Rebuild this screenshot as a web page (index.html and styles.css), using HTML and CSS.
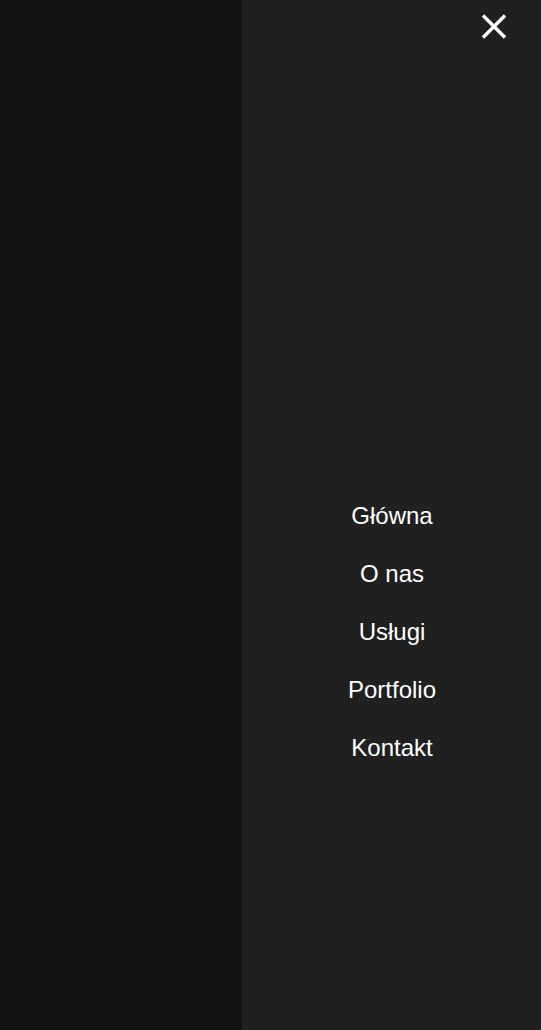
FILE: index.html
```html
<!DOCTYPE html>
<html lang="pl">
<head>
<meta charset="utf-8">
<title>Menu</title>
<link rel="stylesheet" href="styles.css">
</head>
<body>
<div class="page">
  <div class="backdrop"></div>
  <aside class="menu">
    <div class="menu-top">
      <button class="close" aria-label="Zamknij">
        <svg width="26" height="27" viewBox="0 0 26 27"><path d="M2 2.5 L24 24.5 M24 2.5 L2 24.5" stroke="#fff" stroke-width="3.4" fill="none"/></svg>
      </button>
    </div>
    <nav class="nav">
      <a href="#">Główna</a>
      <a href="#">O nas</a>
      <a href="#">Usługi</a>
      <a href="#">Portfolio</a>
      <a href="#">Kontakt</a>
    </nav>
  </aside>
</div>
</body>
</html>
```

FILE: styles.css
```css
html, body {
  margin: 0;
  padding: 0;
  background: #121212;
}
.page {
  display: flex;
  height: 1030px;
  width: 541px;
}
.backdrop {
  width: 242px;
  background: #121212;
}
.menu {
  flex: 1;
  background: #202020;
  display: flex;
  flex-direction: column;
}
.menu-top {
  display: flex;
  justify-content: flex-end;
  padding: 13px 34px 0 0;
}
.close {
  background: none;
  border: 0;
  padding: 0;
  margin: 0;
  width: 26px;
  height: 27px;
  display: block;
  cursor: pointer;
}
.close svg {
  display: block;
}
.nav {
  display: flex;
  flex-direction: column;
  align-items: center;
  margin-top: 447px;
  padding-left: 1px;
}
.nav a {
  font-family: "Liberation Sans", Arial, sans-serif;
  font-size: 24px;
  line-height: 58px;
  color: #ffffff;
  text-decoration: none;
}
```
